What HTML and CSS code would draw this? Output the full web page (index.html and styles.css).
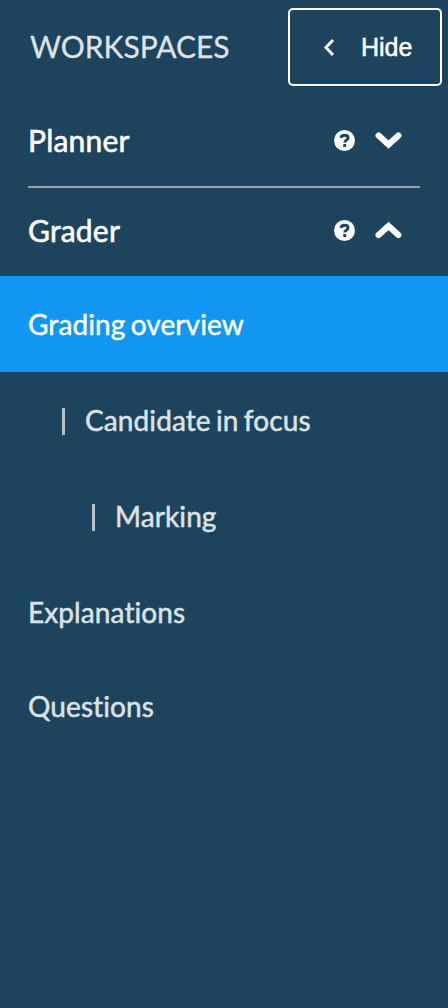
FILE: index.html
```html
<!DOCTYPE html>
<html lang="en">
<head>
    <meta charset="UTF-8">
    <meta name="viewport" content="width=device-width, initial-scale=1.0">
    <title>Workspaces</title>
    <link rel="stylesheet" href="styles.css">
</head>
<body>
<nav class="sidebar">
    <div class="sidebar-header">
        <span class="title">WORKSPACES</span>
        <button class="hide-button" type="button">
            <svg class="back" viewBox="0 0 12 18"><path d="M10 2 3 9.500l7 7.500"/></svg>
            <span>Hide</span>
        </button>
    </div>

    <div class="section planner">
        <span class="section-name">Planner</span>
        <svg class="help" viewBox="0 0 20 20"><circle cx="10" cy="10" r="10"/><path d="M6.500 7.500C7 5.700 8.300 5 10 5c2 0 3.400 1 3.400 2.600 0 2.100-3.200 2-3.200 4.400M10.200 13.400v2.800"/></svg>
        <svg class="chevron" viewBox="0 0 28 18"><path d="M3.600 4.500 13.500 13.500l9.900-9"/></svg>
    </div>

    <div class="section grader">
        <span class="section-name">Grader</span>
        <svg class="help" viewBox="0 0 20 20"><circle cx="10" cy="10" r="10"/><path d="M6.500 7.500C7 5.700 8.300 5 10 5c2 0 3.400 1 3.400 2.600 0 2.100-3.200 2-3.200 4.400M10.200 13.400v2.800"/></svg>
        <svg class="chevron" viewBox="0 0 28 18"><path d="M3.600 14 13.500 5l9.900 9"/></svg>
    </div>

    <ul class="menu">
        <li class="active"><a>Grading overview</a></li>
        <li class="level-1"><a>Candidate in focus</a></li>
        <li class="level-2"><a>Marking</a></li>
        <li><a>Explanations</a></li>
        <li class="last"><a>Questions</a></li>
    </ul>
</nav>
</body>
</html>
```

FILE: styles.css
```css
* { box-sizing: border-box; }
body { margin: 0; background-color: #1d445e; color: #fff; font-family: Lato, sans-serif; font-variant-ligatures: none; }
.sidebar { min-height: 1008px; padding-top: 8px; }
.sidebar-header { display: flex; justify-content: space-between; align-items: center; height: 78px; padding: 0 6px 0 30px; }
.title { padding-bottom: 2px; font-size: 30px; color: #dde3e7; -webkit-text-stroke: 0.3px; }
.hide-button { display: flex; align-items: center; width: 154px; height: 78px; padding: 0 0 0 33px; border: 2px solid #fff; border-radius: 5px; background: none; color: #fff; font: 25px "Liberation Sans", sans-serif; -webkit-text-stroke: 0.5px; }
.back { width: 12px; height: 18px; margin-right: 26px; fill: none; stroke: #fff; stroke-width: 3; }
.section { display: flex; align-items: center; margin: 0 28px; padding-right: 17px; }
.planner { height: 102px; padding-top: 8px; border-bottom: 2px solid #a0a1a6; }
.grader { height: 88px; padding-bottom: 4px; }
.section-name { flex: 1; font-size: 30px; letter-spacing: 0.2px; -webkit-text-stroke: 0.6px; }
.help { width: 21px; height: 21px; margin-right: 20px; fill: #fff; }
.help path { fill: none; stroke: #1d445e; stroke-width: 2.8; }
.chevron { width: 28px; height: 18px; fill: none; stroke: #fff; stroke-width: 6.2; stroke-linecap: round; }
.menu { margin: 0; padding: 0; list-style: none; }
.menu li { display: flex; align-items: center; height: 96px; padding: 0 0 1px 28px; font-size: 28px; letter-spacing: 0.1px; word-spacing: -2px; color: #dce2e6; -webkit-text-stroke: 0.5px; }
.menu .active { background-color: #1097f3; color: #fff; }
.menu .level-1 { padding-left: 62px; }
.menu .level-2 { padding-left: 92px; }
.level-1::before, .level-2::before { content: ""; width: 3px; height: 27px; margin: 4px 20px 0 0; background-color: #b6c2ca; }
.menu .last { height: 92px; }
```
